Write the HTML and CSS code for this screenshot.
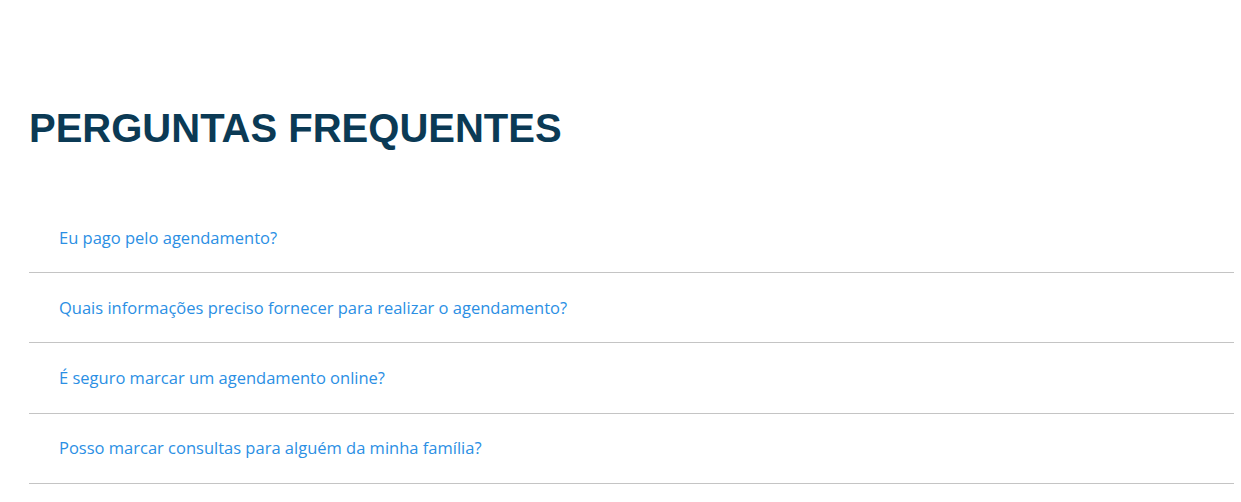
FILE: index.html
```html
<!DOCTYPE html>
<html lang="pt">
<head>
<meta charset="utf-8">
<title>Perguntas frequentes</title>
<link rel="stylesheet" href="styles.css">
</head>
<body>
<section class="faq">
  <h1 class="faq-title">PERGUNTAS FREQUENTES</h1>
  <ul class="faq-list">
    <li class="faq-item">Eu pago pelo agendamento?</li>
    <li class="faq-item">Quais informações preciso fornecer para realizar o agendamento?</li>
    <li class="faq-item">É seguro marcar um agendamento online?</li>
    <li class="faq-item">Posso marcar consultas para alguém da minha família?</li>
  </ul>
</section>
</body>
</html>
```
FILE: styles.css
```css
html, body {
  margin: 0;
  padding: 0;
  background: #ffffff;
}

.faq {
  padding: 0 7px 0 29px;
}

.faq-title {
  margin: 0;
  padding-top: 104px;
  font-family: "Liberation Sans", Arial, sans-serif;
  font-weight: 700;
  font-size: 40px;
  line-height: 48px;
  color: #0b3a55;
}

.faq-list {
  list-style: none;
  margin: 51px 0 0;
  padding: 0;
}

.faq-item {
  padding: 22.6px 30px;
  line-height: 24px;
  font-family: "Open Sans", "Noto Sans", sans-serif;
  font-size: 16.5px;
  color: #2b8fe4;
  border-bottom: 1px solid #c4c4c4;
}
```
